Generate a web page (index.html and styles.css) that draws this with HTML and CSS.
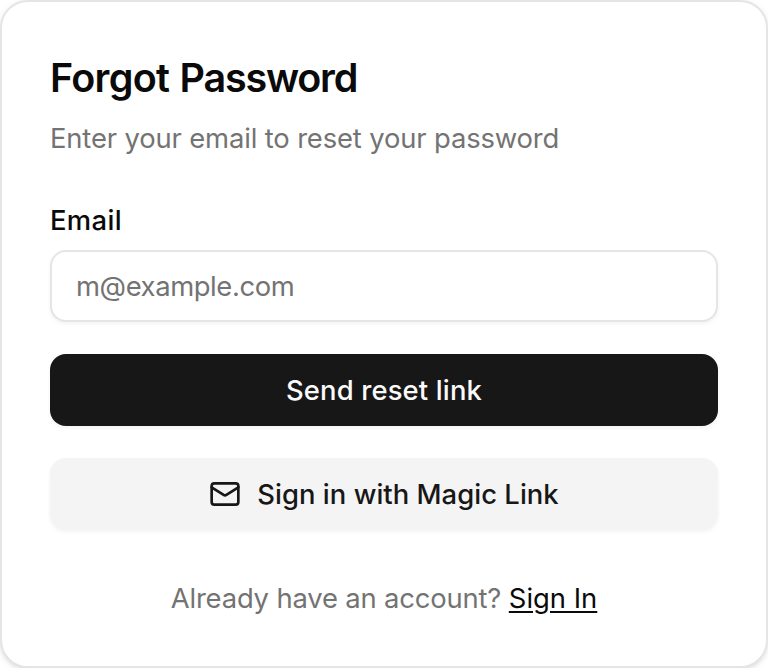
FILE: index.html
```html
<!DOCTYPE html>
<html lang="en">
<head>
<meta charset="utf-8">
<title>Forgot Password</title>
<link rel="stylesheet" href="styles.css">
</head>
<body>
<main class="card">
  <h1 class="title"><span class="title-lead">Forgot</span> <span>Password</span></h1>
  <p class="subtitle"><span>Enter your email to reset your password</span></p>
  <form class="form">
    <label class="label" for="email"><span>Email</span></label>
    <input class="input" id="email" type="email" placeholder="m@example.com">
    <button class="button primary" type="button"><span>Send reset link</span></button>
    <button class="button secondary" type="button">
      <svg class="icon" viewBox="0 0 24 24" fill="none" stroke="currentColor" stroke-width="2" stroke-linecap="round" stroke-linejoin="round"><rect width="20" height="16" x="2" y="4" rx="2"/><path d="m22 7-8.97 5.7a1.94 1.94 0 0 1-2.06 0L2 7"/></svg>
      <span>Sign in with Magic Link</span>
    </button>
  </form>
  <p class="footer"><span class="question">Already have an account?</span> <a class="link" href="#">Sign In</a></p>
</main>
</body>
</html>
```

FILE: styles.css
```css
* { box-sizing: border-box; }
body { margin: 0; background: #fff; font-family: Inter, "Liberation Sans", sans-serif; color: #0a0a0a; }
.card { display: flex; flex-direction: column; height: 668px; padding: 48px; border: 2px solid #e5e5e5; border-radius: 28px; background: #fff; box-shadow: 0 2px 6px rgba(0,0,0,.1), 0 2px 4px -2px rgba(0,0,0,.1); }
.title { margin: 8px 0 0; font-size: 39.5px; line-height: 40px; font-weight: 620; letter-spacing: -1.2px; word-spacing: 1.4px; white-space: nowrap; }
.title-lead { letter-spacing: -0.7px; }
.subtitle { margin: 20px 0 0; font-size: 27.4px; line-height: 40px; color: #737373; letter-spacing: -0.14px; white-space: nowrap; }
.form { display: flex; flex-direction: column; margin-top: 48px; }
.label { font-size: 27.4px; line-height: 28px; font-weight: 500; letter-spacing: 0.35px; }
.input { height: 72px; margin-top: 16px; padding: 0 24px; border: 2px solid #e5e5e5; border-radius: 16px; font: 400 27.4px/40px Inter, "Liberation Sans", sans-serif; letter-spacing: -0.4px; box-shadow: 0 2px 4px rgba(0,0,0,.05); outline: 0; }
.input::placeholder { color: #737373; opacity: 1; }
.button { display: flex; align-items: center; justify-content: center; gap: 16px; height: 72px; margin-top: 32px; padding: 0; border: 0; border-radius: 16px; font: 500 27.4px/40px Inter, "Liberation Sans", sans-serif; box-shadow: 0 2px 4px rgba(0,0,0,.05); white-space: nowrap; }
.primary { background: #171717; color: #fafafa; letter-spacing: 0.15px; }
.secondary { background: #f4f4f4; color: #171717; letter-spacing: 0.04px; }
.icon { width: 32px; height: 32px; }
.footer { margin: 48px 0 0; font-size: 27.4px; line-height: 40px; text-align: center; color: #737373; white-space: nowrap; }
.question { letter-spacing: -0.17px; }
.link { color: #0a0a0a; text-decoration: underline 2px; text-underline-offset: 3px; }
```
